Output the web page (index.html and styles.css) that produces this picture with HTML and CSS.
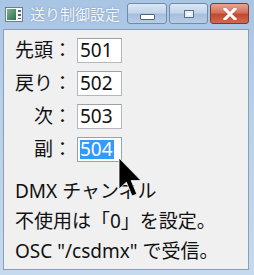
FILE: index.html
```html
<!DOCTYPE html>
<html lang="ja">

<head>
    <meta charset="utf-8">
    <title>送り制御設定</title>
    <link rel="stylesheet" href="styles.css">
</head>

<body>

    <div id="window">

        <div id="titlebar">
            <svg class="appicon" width="18" height="15" viewBox="0 0 18 15">
                <defs>
                    <linearGradient id="ig" x1="0" y1="0" x2="1" y2="1">
                        <stop offset="0" stop-color="#7fb48a" />
                        <stop offset="1" stop-color="#2f6d55" />
                    </linearGradient>
                </defs>
                <rect x="0.5" y="0.5" width="17" height="14" fill="#f4f6f8" stroke="#6f7e8e" />
                <rect x="2" y="2" width="9" height="11" fill="url(#ig)" />
                <rect x="13" y="3" width="3" height="2" fill="#556677" />
                <rect x="13" y="7" width="3" height="2" fill="#556677" />
                <rect x="13" y="11" width="3" height="1" fill="#556677" />
            </svg>
            <span class="title">送り制御設定</span>
            <div class="caption">
                <div class="cbtn min"><span class="dash"></span></div>
                <div class="cbtn max"><span class="box"></span></div>
                <div class="cbtn close">
                    <svg width="16" height="12" viewBox="0 0 16 12">
                        <path d="M3 1 L13 11 M13 1 L3 11" stroke="#ffffff" stroke-width="3" stroke-linecap="square" />
                    </svg>
                </div>
            </div>
        </div>

        <div id="client">
            <div class="form">
                <div class="label">先頭：</div>
                <div class="field">501</div>
                <div class="label">戻り：</div>
                <div class="field">502</div>
                <div class="label">次：</div>
                <div class="field">503</div>
                <div class="label">副：</div>
                <div class="field focus"><span class="sel">504</span></div>
            </div>

            <div class="notes">
                <p>DMX チャンネル</p>
                <p>不使用は「0」を設定。</p>
                <p>OSC "/csdmx" で受信。</p>
            </div>
        </div>

    </div>

    <!-- mouse pointer over the form -->
    <svg class="pointer" width="26" height="44" viewBox="0 0 13 22">
        <path d="M0.5 0.5 L0.5 16 L4.2 12.6 L7 19.5 L9.4 18.5 L6.6 11.8 L11.5 11.8 Z" fill="#000" stroke="#fff" stroke-width="0.4" />
    </svg>

</body>

</html>
```

FILE: styles.css
```css
html,
body {
    margin: 0px;
    padding: 0px;
    width: 254px;
    height: 275px;
    overflow: hidden;
    font-family: "Noto Sans", "Noto Sans CJK JP", sans-serif;
}

body {
    position: relative;
    background: linear-gradient(180deg, #a9c5e4 0%, #b9d0ea 40%, #c5d9ef 100%);
}

#window {
    display: flex;
    flex-direction: column;
    height: 100%;
}

#titlebar {
    height: 29px;
    display: flex;
    align-items: flex-start;
    padding-left: 5px;
    box-sizing: border-box;
}

.appicon {
    flex-shrink: 0;
    margin-top: 7px;
}

.title {
    margin-left: 7px;
    margin-top: 4px;
    font-size: 15px;
    line-height: 20px;
    color: #f2f6fb;
    text-shadow: 0 0 2px rgba(80, 110, 150, 0.6);
    font-family: "Noto Sans CJK JP", sans-serif;
    white-space: nowrap;
}

.caption {
    margin-left: auto;
    margin-right: 5px;
    margin-top: 3px;
    display: flex;
    gap: 2px;
    flex-shrink: 0;
}

.cbtn {
    height: 21px;
    box-sizing: border-box;
    border: 1px solid #6f8bad;
    border-radius: 3px;
    display: flex;
    align-items: center;
    justify-content: center;
}

.min,
.max {
    width: 40px;
    background: linear-gradient(180deg, #dbe7f4 0%, #c2d5ea 45%, #a7bfdc 55%, #b8cde6 100%);
}

.max {
    width: 39px;
}

.close {
    width: 39px;
    border-color: #7b3a30;
    background: linear-gradient(180deg, #e8a493 0%, #d5715a 45%, #c04a2f 55%, #cf6a4f 100%);
}

.dash {
    width: 13px;
    height: 4px;
    margin-top: 6px;
    background: #fff;
    border: 1px solid #50637a;
    border-radius: 1px;
}

.box {
    width: 8px;
    height: 6px;
    border: 1px solid #5c6f86;
    background: #fff;
    box-shadow: inset 0 0 0 2px #e6edf5;
}

#client {
    flex: 1;
    margin: 0px 5px 5px 3px;
    background-color: #f0f0f0;
    border: 1px solid #8a9fb6;
    padding: 8px 0px 0px 11px;
}

.form {
    display: grid;
    grid-template-columns: 61px 45px;
    row-gap: 8px;
    column-gap: 1px;
}

.label {
    text-align: right;
    padding-right: 4px;
    font-size: 19px;
    line-height: 25px;
    color: #111;
}

.field {
    height: 25px;
    box-sizing: border-box;
    background: #fff;
    border: 1px solid #b4b7bd;
    border-top-color: #9da1a8;
    padding-left: 2px;
    font-size: 19px;
    line-height: 23px;
    color: #111;
}

.focus {
    border-color: #8aa6c4;
}

.sel {
    background: #3399ff;
    color: #fff;
    display: inline-block;
    line-height: 19px;
    margin-top: 2px;
    padding-right: 1px;
}

.notes {
    margin-top: 14px;
}

.notes p {
    margin: 0px;
    font-size: 19px;
    line-height: 30px;
    color: #111;
}

.pointer {
    position: absolute;
    left: 118px;
    top: 157px;
}
```
